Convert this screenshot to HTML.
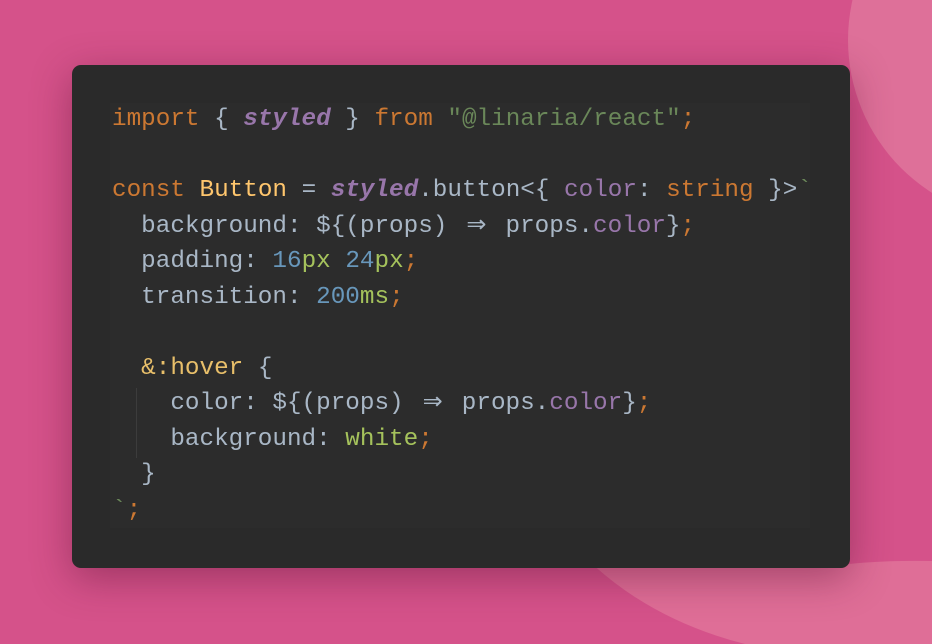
<!DOCTYPE html>
<html><head><meta charset="utf-8"><style>
html,body{margin:0;padding:0;width:932px;height:644px;overflow:hidden}
.wrap{position:relative;width:932px;height:644px;overflow:hidden;background:#d5528a;font-family:"Liberation Mono",monospace}
.c1{position:absolute;left:848px;top:-141px;width:362px;height:362px;border-radius:50%;background:#de7099}
svg.bg{position:absolute;left:0;top:0}
.card{position:absolute;left:72px;top:65px;width:778px;height:503px;background:#2a2a2a;border-radius:9px;box-shadow:0 10px 40px rgba(90,20,50,.45)}
.panel{position:absolute;left:38px;top:38px;width:700px;height:425px;background:#2c2c2c}
pre{position:absolute;left:40px;top:37px;margin:0;font-size:24.3px;line-height:35.5px;color:#a9b7c6;font-family:"Liberation Mono",monospace}
.k{color:#cc7832}.s{color:#6a8759}.p{color:#9876aa}.pb{color:#9876aa;font-weight:bold;font-style:italic}.y{color:#ffc66d}.h{color:#e8bf6a}.n{color:#6897bb}.g{color:#a5c25c}
.a{display:inline-block;width:29px;text-align:center;font-family:"DejaVu Sans",sans-serif;font-size:24px;line-height:1}
.guide{position:absolute;left:64px;top:323px;width:1px;height:70px;background:#3c3c3c}
</style></head><body><div class="wrap">
<div class="c1"></div>
<svg class="bg" width="932" height="644"><path d="M560,530 Q630,615 745,644 L932,644 L932,561 Q880,560 840,565 Z" fill="#df6e97"/></svg>
<div class="card"><div class="panel"></div><div class="guide"></div>
<pre><span class="k">import</span> { <span class="pb">styled</span> } <span class="k">from</span> <span class="s">"@linaria/react"</span><span class="k">;</span>

<span class="k">const</span> <span class="y">Button</span> = <span class="pb">styled</span>.button&lt;{ <span class="p">color</span>: <span class="k">string</span> }&gt;<span class="s">`</span>
  background: ${(props) <span class="a">⇒</span> props.<span class="p">color</span>}<span class="k">;</span>
  padding: <span class="n">16</span><span class="g">px</span> <span class="n">24</span><span class="g">px</span><span class="k">;</span>
  transition: <span class="n">200</span><span class="g">ms</span><span class="k">;</span>

  <span class="h">&amp;:hover</span> {
    color: ${(props) <span class="a">⇒</span> props.<span class="p">color</span>}<span class="k">;</span>
    background: <span class="g">white</span><span class="k">;</span>
  }
<span class="s">`</span><span class="k">;</span></pre>
</div>
</div></body></html>
